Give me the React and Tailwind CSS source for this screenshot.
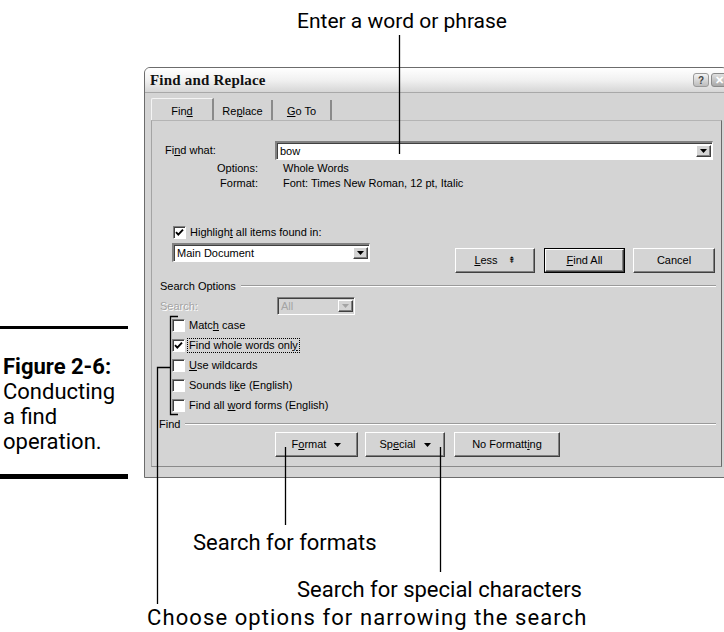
import React from 'react'

const raised =
  'flex items-center justify-center bg-[#d4d4d4] border border-t-white border-l-white border-r-[#404040] border-b-[#404040] shadow-[inset_-1px_-1px_0_#808080]'

const sunken =
  'border border-t-[#808080] border-l-[#808080] border-r-white border-b-white shadow-[inset_1px_1px_0_#404040]'

function Arrow({ gray }) {
  return (
    <svg width="7" height="4" viewBox="0 0 7 4">
      <path d="M0 0h7L3.5 4z" fill={gray ? '#a4a4a4' : '#000'} />
    </svg>
  )
}

function Combo({ className = '', text, gray }) {
  return (
    <div className={`flex items-stretch p-[2px] pr-[1px] ${gray ? 'bg-[#d4d4d4]' : 'bg-white'} ${sunken} ${className}`}>
      <span className={`flex-1 flex items-center pl-[1px] ${gray ? 'text-[#a4a4a4]' : 'text-black'}`}>{text}</span>
      <div className={`${raised} w-[15px]`}>
        <Arrow gray={gray} />
      </div>
    </div>
  )
}

function Check({ checked }) {
  return (
    <div className={`w-[13px] h-[13px] shrink-0 bg-white flex items-center justify-center ${sunken}`}>
      {checked && (
        <svg width="9" height="9" viewBox="0 0 9 9">
          <path d="M1 4.2 L3.3 6.6 L8 1.6" stroke="#000" strokeWidth="1.9" fill="none" />
        </svg>
      )}
    </div>
  )
}

function Sep({ label, indent }) {
  return (
    <div className={`h-[14px] flex items-center mr-[5px] ${indent}`}>
      <span>{label}</span>
      <div className="flex-1 ml-[5px] h-[2px] border-t border-[#9a9a9a] border-b border-b-white" />
    </div>
  )
}

const options = [
  { label: <>Matc<u>h</u> case</> },
  { label: <>Find whole words onl<u>y</u></>, checked: true, focus: true },
  { label: <><u>U</u>se wildcards</> },
  { label: <>Sounds li<u>k</u>e (English)</> },
  { label: <>Find all <u>w</u>ord forms (English)</> },
]

function Dialog() {
  return (
    <div className="w-[584px] h-[411px] shrink-0 bg-[#d4d4d4] border border-[#6c6c6c] rounded-t-[6px] flex flex-col font-['Liberation_Sans',Arial,sans-serif] text-[11px] text-black">
      {/* title bar */}
      <div className="h-[25px] shrink-0 flex items-center pl-[5px] rounded-t-[5px] bg-gradient-to-b from-[#ffffff] via-[#f1f1f1] to-[#d6d6d6] border-b border-[#a8a8a8]">
        <span className="font-['Liberation_Serif',serif] font-bold text-[15px] text-[#111] tracking-[0.2px]">Find and Replace</span>
        <div className="ml-auto flex gap-[2px] items-center">
          <div className="w-[16px] h-[14px] rounded-[3px] border border-[#9a9a9a] bg-gradient-to-b from-[#f4f4f4] to-[#bdbdbd] flex items-center justify-center text-[10px] font-bold text-[#444]">?</div>
          <div className="w-[16px] h-[14px] rounded-[3px] border border-[#8a8a8a] bg-gradient-to-b from-[#e0e0e0] to-[#a8a8a8] flex items-center justify-center text-[11px] font-bold text-white">✕</div>
        </div>
      </div>

      <div className="flex-1 px-[6px] flex flex-col">
        {/* tabs */}
        <div className="h-[27px] shrink-0 flex items-end">
          <div className="w-[63px] h-[22px] flex items-center justify-center pt-[4px] border-l border-t border-[#f4f4f4] border-r-2 border-r-[#8a8a8a] rounded-tl-[2px]">
            Fin<u>d</u>
          </div>
          <div className="w-[59px] h-[20px] flex items-center justify-center pt-[2px] border-r-2 border-[#8a8a8a]">
            Re<u>p</u>lace
          </div>
          <div className="w-[59px] h-[20px] flex items-center justify-center pt-[2px] border-r-2 border-[#8a8a8a]">
            <u>G</u>o To
          </div>
        </div>

        {/* panel */}
        <div className="w-[571px] h-[347px] shrink-0 border border-t-[#b4b4b4] border-l-[#a4a4a4] border-r-[#6a6a6a] border-b-[#8a8a8a] flex flex-col">
          <div className="mt-[20px] h-[19px] flex items-center">
            <span className="ml-[13px] w-[110px]">Fi<u>n</u>d what:</span>
            <Combo className="w-[438px] h-[19px] border-t-2 border-l-2 border-t-[#3c3c3c] border-l-[#3c3c3c]" text="bow" />
          </div>
          <div className="mt-[1px] h-[15px] flex items-center">
            <span className="w-[106px] text-right">Options:</span>
            <span className="ml-[25px]">Whole Words</span>
          </div>
          <div className="h-[15px] flex items-center">
            <span className="w-[106px] text-right">Format:</span>
            <span className="ml-[25px]">Font: Times New Roman, 12 pt, Italic</span>
          </div>

          <div className="mt-[34px] h-[14px] flex items-center ml-[21px] gap-[4px]">
            <Check checked />
            <span>Highligh<u>t</u> all items found in:</span>
          </div>

          <div className="mt-[4px] h-[30px] flex items-start">
            <Combo className="ml-[20px] w-[198px] h-[19px] border-t-2 border-l-2 border-t-[#3c3c3c] border-l-[#3c3c3c]" text="Main Document" />
            <div className={`${raised} ml-[85px] mt-[5px] w-[80px] h-[25px] gap-[10px]`}>
              <span><u>L</u>ess</span>
              <span className="text-[9px] leading-none">⇞</span>
            </div>
            <div className="ml-[9px] mt-[5px] w-[81px] h-[25px] border border-black flex">
              <div className={`${raised} flex-1`}>
                <span><u>F</u>ind All</span>
              </div>
            </div>
            <div className={`${raised} ml-[8px] mt-[5px] w-[82px] h-[25px]`}>Cancel</div>
          </div>

          <div className="mt-[6px]">
            <Sep label="Search Options" indent="ml-[8px]" />
          </div>

          <div className="mt-[4px] h-[18px] flex items-center">
            <span className="ml-[8px] w-[117px] text-[#a4a4a4] [text-shadow:1px_1px_0_#ffffff]">Search:</span>
            <Combo className="w-[78px] h-[18px]" text="All" gray />
          </div>

          <div className="flex flex-col">
            {options.map((o, i) => (
              <div key={i} className="h-[20px] flex items-center ml-[20px] gap-[4px]">
                <Check checked={o.checked} />
                <span className={o.focus ? 'border border-dotted border-black px-[1px] -ml-[2px] leading-[13px]' : ''}>{o.label}</span>
              </div>
            ))}
          </div>

          <div className="mt-[2px]">
            <Sep label="Find" indent="ml-[7px]" />
          </div>

          <div className="mt-[1px] h-[25px] flex ml-[123px]">
            <div className={`${raised} w-[83px] gap-[8px]`}>
              <span>F<u>o</u>rmat</span>
              <Arrow />
            </div>
            <div className={`${raised} ml-[7px] w-[80px] gap-[8px]`}>
              <span>Sp<u>e</u>cial</span>
              <Arrow />
            </div>
            <div className={`${raised} ml-[9px] w-[106px]`}>
              <span>No Formatt<u>i</u>ng</span>
            </div>
          </div>
        </div>
      </div>
    </div>
  )
}

export default function App() {
  return (
    <div className="relative w-[724px] h-[632px] overflow-hidden bg-white text-black font-['Roboto','Liberation_Sans',sans-serif]">
      <div className="h-[67px] pt-[8px] pl-[297px] text-[21px] leading-[26px]">Enter a word or phrase</div>

      <div className="flex">
        <div className="w-[144px] shrink-0 flex flex-col">
          <div className="mt-[259px] w-[128px] h-[3px] bg-black" />
          <div className="mt-[25px] pl-[3px] text-[22px] leading-[25px]">
            <div className="font-bold">Figure 2-6:</div>
            <div>Conducting</div>
            <div>a find</div>
            <div>operation.</div>
          </div>
          <div className="mt-[20px] w-[128px] h-[5px] bg-black" />
        </div>
        <Dialog />
      </div>

      <div className="text-[22px] leading-[26px]">
        <div className="mt-[51px] pl-[193px]">Search for formats</div>
        <div className="mt-[21px] pl-[297px]">Search for special characters</div>
        <div className="mt-[4px] pl-[147px] tracking-[1.1px] leading-[22px]">Choose options for narrowing the search</div>
      </div>

      {/* callout lines */}
      <svg className="absolute inset-0 pointer-events-none" width="724" height="632" viewBox="0 0 724 632">
        <g stroke="#000" strokeWidth="1.3" fill="none">
          <path d="M399.5 35 V154" />
          <path d="M285.5 447 V525" />
          <path d="M440.5 447 V572" />
          <path d="M178 316.5 H170.5 V414.5 H178" />
          <path d="M170.5 367.5 H157.5 V604" />
        </g>
      </svg>
    </div>
  )
}
